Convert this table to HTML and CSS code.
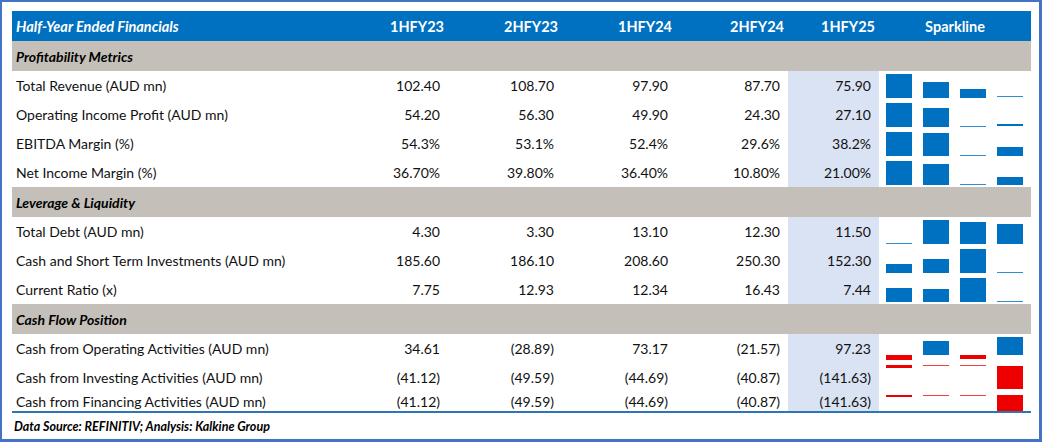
FILE: index.html
```html
<!DOCTYPE html>
<html>
<head>
<meta charset="utf-8">
<link rel="stylesheet" href="styles.css">
</head>
<body>
<div class="frame">
  <table class="fin">
    <colgroup>
      <col class="c-label"><col class="c-num"><col class="c-num"><col class="c-num"><col class="c-num4"><col class="c-last"><col class="c-spark">
    </colgroup>
    <thead>
      <tr class="head">
        <th class="title">Half-Year Ended Financials</th>
        <th>1HFY23</th><th>2HFY23</th><th>1HFY24</th><th>2HFY24</th><th>1HFY25</th><th class="sp">Sparkline</th>
      </tr>
    </thead>
    <tbody>
      <tr class="sect"><td colspan="7">Profitability Metrics</td></tr>
      <tr>
        <td class="lbl">Total Revenue (AUD mn)</td><td>102.40</td><td>108.70</td><td>97.90</td><td>87.70</td><td class="hl">75.90</td>
        <td class="spk"><div class="spark"><i class="b" style="margin-top:3px;height:24px"></i><i class="b" style="margin-top:11px;height:16px"></i><i class="b" style="margin-top:18px;height:9px"></i><i class="b thin" style="margin-top:25px;height:1px"></i></div></td>
      </tr>
      <tr>
        <td class="lbl">Operating Income Profit (AUD mn)</td><td>54.20</td><td>56.30</td><td>49.90</td><td>24.30</td><td class="hl">27.10</td>
        <td class="spk"><div class="spark"><i class="b" style="margin-top:3px;height:24px"></i><i class="b" style="margin-top:8px;height:19px"></i><i class="b thin" style="margin-top:26px;height:1px"></i><i class="b" style="margin-top:24px;height:2px"></i></div></td>
      </tr>
      <tr>
        <td class="lbl">EBITDA Margin (%)</td><td>54.3%</td><td>53.1%</td><td>52.4%</td><td>29.6%</td><td class="hl">38.2%</td>
        <td class="spk"><div class="spark"><i class="b" style="margin-top:3px;height:24px"></i><i class="b" style="margin-top:4px;height:23px"></i><i class="b thin" style="margin-top:26px;height:1px"></i><i class="b" style="margin-top:18px;height:9px"></i></div></td>
      </tr>
      <tr>
        <td class="lbl">Net Income Margin (%)</td><td>36.70%</td><td>39.80%</td><td>36.40%</td><td>10.80%</td><td class="hl">21.00%</td>
        <td class="spk"><div class="spark"><i class="b" style="margin-top:3px;height:24px"></i><i class="b" style="margin-top:6px;height:21px"></i><i class="b thin" style="margin-top:26px;height:1px"></i><i class="b" style="margin-top:19px;height:8px"></i></div></td>
      </tr>
      <tr class="sect"><td colspan="7">Leverage &amp; Liquidity</td></tr>
      <tr>
        <td class="lbl">Total Debt (AUD mn)</td><td>4.30</td><td>3.30</td><td>13.10</td><td>12.30</td><td class="hl">11.50</td>
        <td class="spk"><div class="spark"><i class="b thin" style="margin-top:26px;height:1px"></i><i class="b" style="margin-top:3px;height:24px"></i><i class="b" style="margin-top:5px;height:22px"></i><i class="b" style="margin-top:7px;height:20px"></i></div></td>
      </tr>
      <tr>
        <td class="lbl">Cash and Short Term Investments (AUD mn)</td><td>185.60</td><td>186.10</td><td>208.60</td><td>250.30</td><td class="hl">152.30</td>
        <td class="spk"><div class="spark"><i class="b" style="margin-top:18px;height:9px"></i><i class="b" style="margin-top:13px;height:14px"></i><i class="b" style="margin-top:3px;height:24px"></i><i class="b thin" style="margin-top:26px;height:1px"></i></div></td>
      </tr>
      <tr>
        <td class="lbl">Current Ratio (x)</td><td>7.75</td><td>12.93</td><td>12.34</td><td>16.43</td><td class="hl">7.44</td>
        <td class="spk"><div class="spark"><i class="b" style="margin-top:13px;height:14px"></i><i class="b" style="margin-top:14px;height:13px"></i><i class="b" style="margin-top:3px;height:24px"></i><i class="b thin" style="margin-top:26px;height:1px"></i></div></td>
      </tr>
      <tr class="sect"><td colspan="7">Cash Flow Position</td></tr>
      <tr>
        <td class="lbl">Cash from Operating Activities (AUD mn)</td><td>34.61</td><td>(28.89)</td><td>73.17</td><td>(21.57)</td><td class="hl">97.23</td>
        <td class="spk"><div class="spark"><i class="b neg" style="margin-top:21px;height:5px"></i><i class="b" style="margin-top:7px;height:14px"></i><i class="b neg" style="margin-top:21px;height:4px"></i><i class="b" style="margin-top:3px;height:18px"></i></div></td>
      </tr>
      <tr>
        <td class="lbl">Cash from Investing Activities (AUD mn)</td><td>(41.12)</td><td>(49.59)</td><td>(44.69)</td><td>(40.87)</td><td class="hl">(141.63)</td>
        <td class="spk"><div class="spark"><i class="b neg" style="margin-top:2px;height:3px"></i><i class="b neg thin" style="margin-top:2px;height:1px"></i><i class="b neg thin" style="margin-top:2px;height:1px"></i><i class="b neg" style="margin-top:3px;height:23px"></i></div></td>
      </tr>
      <tr class="last">
        <td class="lbl">Cash from Financing Activities (AUD mn)</td><td>(41.12)</td><td>(49.59)</td><td>(44.69)</td><td>(40.87)</td><td class="hl">(141.63)</td>
        <td class="spk"><div class="spark"><i class="b neg" style="margin-top:3px;height:2px"></i><i class="b neg thin" style="margin-top:3px;height:1px"></i><i class="b neg thin" style="margin-top:3px;height:1px"></i><i class="b neg" style="margin-top:3px;height:23px"></i></div></td>
      </tr>
    </tbody>
  </table>
  <div class="source">Data Source: REFINITIV; Analysis: Kalkine Group</div>
</div>
</body>
</html>
```

FILE: styles.css
```css
* { box-sizing: border-box; }
html, body { margin: 0; padding: 0; background: #fff; }
body { width: 1042px; height: 442px; overflow: hidden; }
.frame {
  width: 1042px;
  height: 442px;
  border-style: solid;
  border-color: #4472c4;
  border-width: 2px 3px 3px 2px;
  padding: 9px 0 0 10px;
  font-family: Lato, "Open Sans", sans-serif;
  color: #111;
}
.fin {
  width: 1019px;
  table-layout: fixed;
  border-collapse: collapse;
  border-bottom: 2px solid #2e75b6;
  font-size: 14px;
}
.c-label { width: 322px; }
.c-num { width: 114px; }
.c-num4 { width: 112px; }
.c-last { width: 91px; }
.c-spark { width: 152px; }
td, th { padding: 0; white-space: nowrap; overflow: hidden; }
.head th {
  background: #0070c0;
  color: #fff;
  height: 30px;
  font-size: 14.5px;
  font-weight: 700;
  text-align: right;
  padding-right: 4px;
}
.head th.title { text-align: left; font-style: italic; padding-left: 4px; }
.head th.sp { text-align: center; padding-right: 0; }
.fin tbody td { height: 29px; text-align: right; padding-right: 8px; }
.fin tbody td.lbl { text-align: left; padding-left: 4px; padding-right: 0; }
.fin tbody tr.sect td {
  background: #c4c0b9;
  height: 30px;
  font-weight: 700;
  font-style: italic;
  padding-left: 4px;
  padding-right: 0;
  text-align: left;
  color: #000;
}
.fin tbody td.hl { background: #dae3f3; }
.fin tbody td.spk { padding: 0; vertical-align: top; }
.spark {
  display: flex;
  align-items: flex-start;
  gap: 11px;
  padding-left: 7px;
  height: 29px;
  overflow: hidden;
}
.b { display: block; width: 26px; background: #0070c0; flex: none; }
.b.thin { background: #2f8fd6; }
.b.neg { background: #ee0000; }
.b.neg.thin { background: #f04040; }
.fin tbody tr.last td { height: 20px; }
tr.last .spark { height: 19px; }
.source {
  margin-top: 6px;
  font-size: 12.5px;
  font-weight: 700;
  font-style: italic;
  color: #000;
  padding-left: 2px;
}
```
